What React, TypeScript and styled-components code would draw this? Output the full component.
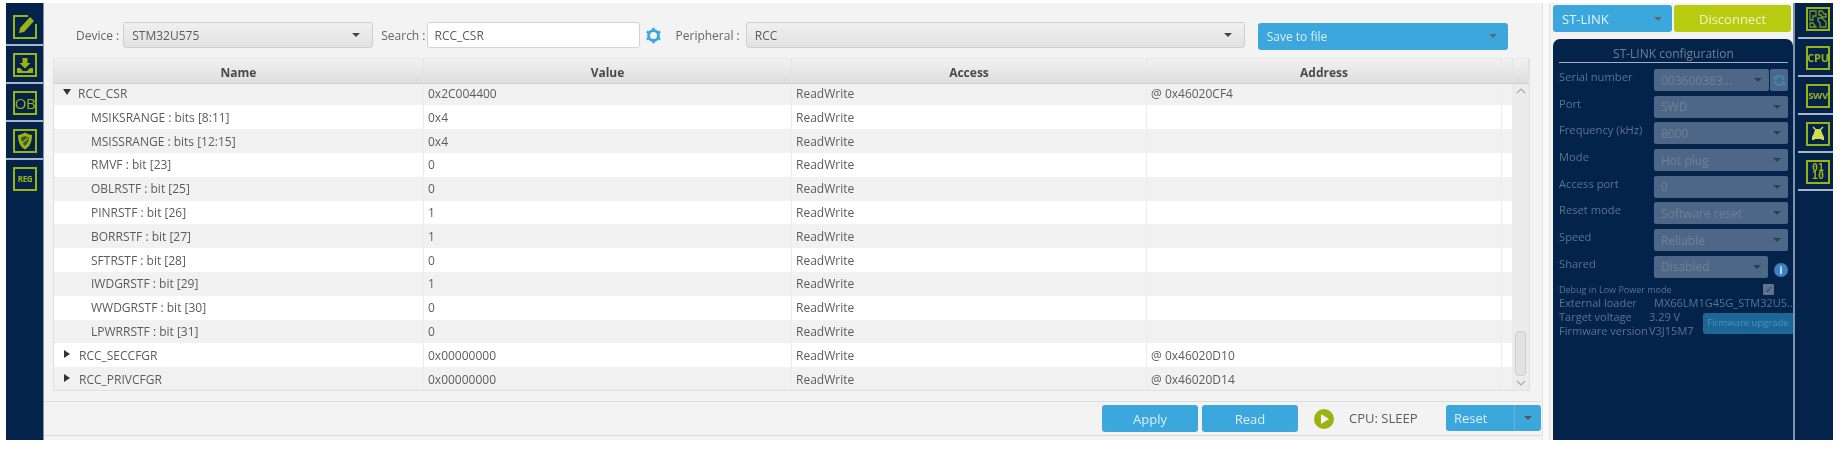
import React from 'react'
import styled, { createGlobalStyle } from 'styled-components'

const NAVY = '#03234b'
const GREEN = '#9ab312'
const BLUE = '#3ca7dc'

const Global = createGlobalStyle`
  html, body { margin: 0; padding: 0; background: #fff; }
  body { font-family: "Open Sans", "Liberation Sans", sans-serif; font-size: 12px; color: #5c5c5c; overflow: hidden; }
`

const Shell = styled.div`
  display: flex;
  width: 1827px;
  height: 437px;
  margin: 3px 0 0 6px;
  overflow: hidden;
  background: #f3f3f3;
  filter: blur(0.5px);
`

const Rail = styled.div<{ $side: 'left' | 'right' }>`
  flex: none;
  display: flex;
  flex-direction: column;
  width: ${(p) => (p.$side === 'left' ? 38 : 40)}px;
  padding-top: ${(p) => (p.$side === 'left' ? 5 : 0)}px;
  box-sizing: border-box;
  background: ${NAVY};
  border-left: ${(p) => (p.$side === 'right' ? '2px solid #7f93ab' : 'none')};
  border-right: ${(p) => (p.$side === 'left' ? '1px solid #7f93ab' : 'none')};
`

const RailItem = styled.div<{ $side: 'left' | 'right' }>`
  flex: none;
  height: 38px;
  box-sizing: border-box;
  padding: 7px 0 0 ${(p) => (p.$side === 'left' ? 7 : 8)}px;
  margin-left: ${(p) => (p.$side === 'left' ? 0 : 3)}px;
  border-bottom: 2px solid #a9b5c4;

  ${(p) =>
    p.$side === 'right'
      ? '&:first-child { height: 36px; padding-top: 4px; }'
      : '&:last-child { border-bottom: none; }'}
`

const RailIcon = styled.div`
  width: 24px;
  height: 24px;
  box-sizing: border-box;
  border: 2px solid ${GREEN};
  display: flex;
  align-items: center;
  justify-content: center;
  text-align: center;
  color: ${GREEN};
  font-weight: 700;
  line-height: 8px;
  overflow: hidden;
`

const RailText = styled.span<{ $size: number; $mono?: boolean; $thin?: boolean }>`
  font-size: ${(p) => p.$size}px;
  font-weight: ${(p) => (p.$thin ? 400 : 700)};
  font-family: ${(p) => (p.$mono ? '"DejaVu Sans Mono", monospace' : 'inherit')};
  letter-spacing: ${(p) => (p.$mono ? 0 : '-0.3px')};
`

const BareIcon = styled.svg`
  display: block;
  width: 24px;
  height: 24px;
`

const Main = styled.div`
  flex: none;
  width: 1497px;
  display: flex;
  flex-direction: column;
`

const Toolbar = styled.div`
  display: flex;
  align-items: center;
  height: 55px;
  padding: 9px 0 0 32px;
  box-sizing: border-box;
`

const Label = styled.span<{ $gap: number }>`
  margin-right: ${(p) => p.$gap}px;
  color: #666;
  white-space: nowrap;
`

const Select = styled.div<{ $w: number; $mr?: number }>`
  width: ${(p) => p.$w}px;
  margin-right: ${(p) => p.$mr ?? 0}px;
  height: 26px;
  box-sizing: border-box;
  padding: 0 12px 0 8px;
  display: flex;
  align-items: center;
  justify-content: space-between;
  border: 1px solid #cfcfcf;
  border-radius: 3px;
  background: linear-gradient(#f0f0f0, #e2e2e2);
`

const Caret = styled.i<{ $color?: string }>`
  width: 0;
  height: 0;
  border-left: 4px solid transparent;
  border-right: 4px solid transparent;
  border-top: 4px solid ${(p) => p.$color ?? '#444'};
`

const SearchBox = styled.div`
  width: 213px;
  height: 26px;
  box-sizing: border-box;
  padding: 0 7px;
  display: flex;
  align-items: center;
  background: #fff;
  border: 1px solid #d4d4d4;
  border-radius: 3px;
`

const GearSlot = styled.span`
  display: flex;
  margin: 0 14px 0 5px;
`

const SaveButton = styled.div`
  width: 250px;
  height: 27px;
  margin: 2px 0 0 13px;
  padding: 0 11px 0 9px;
  box-sizing: border-box;
  display: flex;
  align-items: center;
  justify-content: space-between;
  background: ${BLUE};
  color: #d8eef9;
  border-radius: 3px;
`

const TableFrame = styled.div`
  margin: 0 11px 0 9px;
  height: 333px;
  display: flex;
  flex-direction: column;
  border: 1px solid #e0e0e0;
  border-top: 1px solid #e6e6e6;
  box-sizing: border-box;
  background: #f3f3f3;
`

const cols = '370px 368px 355px 355px 11px'

const HeaderRow = styled.div`
  flex: none;
  display: grid;
  grid-template-columns: ${cols} 1fr;
  height: 25px;
  box-sizing: border-box;
  background: linear-gradient(#f1f1f1, #dedede);
  border-bottom: 1px solid #cfcfcf;
`

const HeaderCell = styled.div`
  display: flex;
  align-items: center;
  justify-content: center;
  padding-top: 2px;
  font-weight: 700;
  color: #4a4a4a;
  border-right: 1px solid #e4e4e4;
`

const TableBody = styled.div`
  flex: 1;
  display: flex;
  min-height: 0;
`

const Rows = styled.div`
  flex: 1;
  overflow: hidden;
`

const ScrollOffset = styled.div`
  margin-top: -2.4px;
`

const Row = styled.div<{ $odd: boolean }>`
  display: grid;
  grid-template-columns: ${cols};
  height: 23.8px;
  background: ${(p) => (p.$odd ? '#fff' : '#f1f1f1')};
`

const Cell = styled.div`
  display: flex;
  align-items: center;
  padding-left: 4px;
  box-sizing: border-box;
  border-right: 1px solid #ececec;
  white-space: nowrap;
`

const NameCell = styled(Cell)<{ $child?: boolean }>`
  padding-left: ${(p) => (p.$child ? 37 : 9)}px;
`

const Twisty = styled.i<{ $open: boolean }>`
  width: 0;
  height: 0;
  margin: 0 7px 3px 0;
  ${(p) =>
    p.$open
      ? 'border-left: 4px solid transparent; border-right: 4px solid transparent; border-top: 6px solid #333;'
      : 'margin-left: 1px; margin-right: 9px; border-top: 4px solid transparent; border-bottom: 4px solid transparent; border-left: 6px solid #333;'}
`

const ScrollBar = styled.div`
  flex: none;
  width: 17px;
  display: flex;
  flex-direction: column;
  align-items: center;
  justify-content: space-between;
  background: #ececec;
`

const Arrow = styled.svg`
  display: block;
  width: 10px;
  height: 14px;
  flex: none;
`

const ScrollSpacer = styled.div`
  flex: 1;
`

const Thumb = styled.div`
  flex: none;
  width: 11px;
  height: 45px;
  box-sizing: border-box;
  background: #e2e2e2;
  border: 1px solid #cdcdcd;
  border-radius: 4px;
`

const Footer = styled.div`
  margin-top: 10px;
  height: 35px;
  box-sizing: border-box;
  padding-top: 3px;
  display: flex;
  align-items: flex-start;
  justify-content: flex-end;
  border-top: 1px solid #dcdcdc;
  border-bottom: 1px solid #dcdcdc;
`

const ActionButton = styled.div<{ $ml?: number }>`
  width: 96px;
  height: 27px;
  margin-left: ${(p) => p.$ml ?? 0}px;
  display: flex;
  align-items: center;
  justify-content: center;
  background: ${BLUE};
  color: #d8eef9;
  border-radius: 3px;
  font-size: 13px;
`

const PlayBadge = styled.div`
  width: 20px;
  height: 20px;
  margin: 4px 15px 0 16px;
  border-radius: 50%;
  background: ${GREEN};
  display: flex;
  align-items: center;
  justify-content: center;
`

const PlayMark = styled.i`
  width: 0;
  height: 0;
  margin-left: 2px;
  border-top: 5px solid transparent;
  border-bottom: 5px solid transparent;
  border-left: 8px solid #f3f3f3;
`

const CpuState = styled.span`
  width: 97px;
  line-height: 27px;
  font-size: 13px;
`

const ResetGroup = styled.div`
  width: 95px;
  height: 26px;
  display: flex;
  background: ${BLUE};
  color: #d8eef9;
  border-radius: 3px;
  font-size: 13px;
`

const ResetLabel = styled.div`
  width: 69px;
  padding-left: 8px;
  box-sizing: border-box;
  line-height: 26px;
  border-right: 1px solid #7fa9c4;
`

const ResetCaret = styled.div`
  flex: 1;
  display: flex;
  align-items: center;
  justify-content: center;
`

const Splitter = styled.div`
  flex: none;
  width: 12px;
  display: flex;
  justify-content: center;
`

const SplitLine = styled.div`
  width: 6px;
  margin-right: 3px;
  background: #fafafa;
  border-left: 1px solid #e2e2e2;
  border-right: 1px solid #e2e2e2;
`

const Side = styled.div`
  flex: none;
  width: 240px;
  padding-top: 2px;
  box-sizing: border-box;
  display: flex;
  flex-direction: column;
  gap: 7px;
`

const SideTop = styled.div`
  flex: none;
  display: flex;
  gap: 2px;
  padding-right: 2px;
`

const ProbeSelect = styled.div`
  width: 119px;
  height: 27px;
  padding: 0 10px 0 9px;
  box-sizing: border-box;
  display: flex;
  align-items: center;
  justify-content: space-between;
  background: ${BLUE};
  color: #e3f3fb;
  border-radius: 3px;
  font-size: 13px;
`

const DisconnectButton = styled.div`
  flex: 1;
  height: 27px;
  display: flex;
  align-items: center;
  justify-content: center;
  background: #b9cb10;
  color: #eef4c4;
  border-radius: 3px;
  font-size: 13px;
`

const ConfigPanel = styled.div`
  flex: 1;
  background: ${NAVY};
  border-radius: 7px 7px 0 0;
  padding: 6px 5px 0 6px;
  position: relative;
`

const ConfigTitle = styled.div`
  height: 17px;
  line-height: 17px;
  text-align: center;
  color: #6f8099;
  font-size: 12px;
  border-bottom: 1px solid #a5b1c0;
  margin-bottom: 6px;
`

const FieldRow = styled.div`
  display: flex;
  height: 22px;
  margin-bottom: 4.7px;
  color: #5d7390;
  font-size: 11.2px;
`

const FieldName = styled.div`
  width: 95px;
  flex: none;
  white-space: nowrap;
  line-height: 15px;
`

const FieldSelect = styled.div<{ $w: number }>`
  width: ${(p) => p.$w}px;
  height: 22px;
  padding: 0 7px;
  box-sizing: border-box;
  display: flex;
  align-items: center;
  justify-content: space-between;
  background: #4f6786;
  color: #6d8099;
  border-radius: 2px;
  font-size: 12px;
`

const RefreshBox = styled.div`
  width: 18px;
  height: 22px;
  margin-left: 1px;
  background: #4f6786;
  border-radius: 2px;
  display: flex;
  align-items: center;
  justify-content: center;
`

const InfoDot = styled.div`
  width: 14px;
  height: 14px;
  margin: 7px 0 0 6px;
  border-radius: 50%;
  background: #3f7fc4;
  color: #dcebf8;
  font-size: 11px;
  font-weight: 700;
  line-height: 14px;
  text-align: center;
`

const DebugRow = styled.div`
  display: flex;
  justify-content: space-between;
  align-items: center;
  height: 13px;
  margin-top: 2px;
  padding-right: 14px;
  color: #5d7390;
  font-size: 9px;
`

const Check = styled.div`
  width: 11px;
  height: 11px;
  background: #5d7390;
  border-radius: 1px;
  color: #2d4666;
  font-size: 10px;
  line-height: 11px;
  text-align: center;
`

const InfoLine = styled.div`
  display: flex;
  height: 14px;
  line-height: 14px;
  color: #5d7390;
  font-size: 11px;
  white-space: nowrap;
`

const InfoKey = styled.span<{ $w: number }>`
  width: ${(p) => p.$w}px;
  flex: none;
`

const UpgradeButton = styled.div`
  position: absolute;
  right: 0;
  top: 274px;
  width: 90px;
  height: 21px;
  background: #1d6797;
  color: #4a8fb8;
  font-size: 9.5px;
  line-height: 20px;
  text-align: center;
  border-radius: 3px 0 0 3px;
`

const rows = [
  { name: 'RCC_CSR', value: '0x2C004400', address: '@ 0x46020CF4', twisty: 'open' },
  { name: 'MSIKSRANGE : bits [8:11]', value: '0x4' },
  { name: 'MSISSRANGE : bits [12:15]', value: '0x4' },
  { name: 'RMVF : bit [23]', value: '0' },
  { name: 'OBLRSTF : bit [25]', value: '0' },
  { name: 'PINRSTF : bit [26]', value: '1' },
  { name: 'BORRSTF : bit [27]', value: '1' },
  { name: 'SFTRSTF : bit [28]', value: '0' },
  { name: 'IWDGRSTF : bit [29]', value: '1' },
  { name: 'WWDGRSTF : bit [30]', value: '0' },
  { name: 'LPWRRSTF : bit [31]', value: '0' },
  { name: 'RCC_SECCFGR', value: '0x00000000', address: '@ 0x46020D10', twisty: 'closed' },
  { name: 'RCC_PRIVCFGR', value: '0x00000000', address: '@ 0x46020D14', twisty: 'closed' },
]

const fields = [
  { label: 'Port', value: 'SWD' },
  { label: 'Frequency (kHz)', value: '8000' },
  { label: 'Mode', value: 'Hot plug' },
  { label: 'Access port', value: '0' },
  { label: 'Reset mode', value: 'Software reset' },
  { label: 'Speed', value: 'Reliable' },
]

const PencilIcon = () => (
  <BareIcon viewBox="0 0 24 24" fill="none">
    <path d="M15 1H1v22h22V9" stroke={GREEN} strokeWidth="2" />
    <path d="M6 18l1-5L17 2l4 4L11 17z" fill={GREEN} />
  </BareIcon>
)

const DownloadIcon = () => (
  <BareIcon viewBox="0 0 24 24" fill="none">
    <rect x="1" y="1" width="22" height="22" stroke={GREEN} strokeWidth="2" />
    <path d="M9.5 5h5v5h3L12 15.5 6.500 10h3z M4 15h3l3 3h4l3-3h3v5H4z" fill={GREEN} />
  </BareIcon>
)

const ShieldIcon = () => (
  <BareIcon viewBox="0 0 24 24" fill="none">
    <rect x="1" y="1" width="22" height="22" stroke={GREEN} strokeWidth="2" />
    <path d="M12 3.500c2.500 1.800 5 2.300 7 2.500 0 7-2 11.500-7 14.500C7 17.500 5 13 5 6c2-.2 4.500-.7 7-2.500z" fill={GREEN} />
    <path d="M12 7c1.500.8 2.600 1.100 4 1.300-.2 4-1.400 6.700-4 8.700-2.600-2-3.800-4.700-4-8.700C9.400 8.100 10.500 7.800 12 7z" fill="#3f5a2e" />
    <path d="M9 14l6-5" stroke={GREEN} strokeWidth="1.500" />
  </BareIcon>
)

const ChipIcon = () => (
  <BareIcon viewBox="0 0 24 24" fill="none">
    <rect x="1" y="1" width="22" height="22" stroke={GREEN} strokeWidth="2" />
    <path d="M4 4h6v5H7v4H4z M13 4h3l2 3h2v3h-4l-1-2h-2z M12 11h4l4 4v5h-6v-4l-2-2z M4 16h3l3 4H4z" stroke={GREEN} strokeWidth="1.300" opacity="0.8" />
  </BareIcon>
)

const BugIcon = () => (
  <BareIcon viewBox="0 0 24 24" fill="none">
    <rect x="1" y="1" width="22" height="22" stroke={GREEN} strokeWidth="2" />
    <path d="M7 5l3 3h4l3-3" stroke="#d7e36a" strokeWidth="1.300" />
    <path d="M12 7c2.500 0 4 2 4 4l2 4v3h-2l-1-1H9l-1 1H6v-3l2-4c0-2 1.500-4 4-4z" fill="#d0df4a" />
  </BareIcon>
)

const GearIcon = () => (
  <svg width="17" height="17" viewBox="0 0 24 24" fill="none">
    <circle cx="12" cy="12" r="7" stroke={BLUE} strokeWidth="4" />
    <path d="M12 1v4M12 19v4M2.500 6.500l3.500 2M18 15.500l3.500 2M2.500 17.500l3.500-2M18 8.500l3.500-2" stroke={BLUE} strokeWidth="3.500" />
  </svg>
)

const RefreshIcon = () => (
  <svg width="13" height="13" viewBox="0 0 24 24" fill="none" stroke="#3f86b8" strokeWidth="3.500">
    <path d="M20 11a8 8 0 0 0-14-5l-2 2M4 13a8 8 0 0 0 14 5l2-2" />
    <path d="M3 3v6h6M21 21v-6h-6" strokeWidth="2.500" />
  </svg>
)

export default function App() {
  return (
    <>
      <Global />
      <Shell>
        <Rail $side="left">
          <RailItem $side="left"><PencilIcon /></RailItem>
          <RailItem $side="left"><DownloadIcon /></RailItem>
          <RailItem $side="left"><RailIcon><RailText $size={15} $thin>OB</RailText></RailIcon></RailItem>
          <RailItem $side="left"><ShieldIcon /></RailItem>
          <RailItem $side="left"><RailIcon><RailText $size={8}>REG</RailText></RailIcon></RailItem>
        </Rail>

        <Main>
          <Toolbar>
            <Label $gap={4}>Device :</Label>
            <Select $w={250} $mr={8}>STM32U575<Caret /></Select>
            <Label $gap={1}>Search :</Label>
            <SearchBox>RCC_CSR</SearchBox>
            <GearSlot><GearIcon /></GearSlot>
            <Label $gap={6}>Peripheral :</Label>
            <Select $w={499}>RCC<Caret /></Select>
            <SaveButton>Save to file<Caret $color="#666" /></SaveButton>
          </Toolbar>

          <TableFrame>
            <HeaderRow>
              <HeaderCell>Name</HeaderCell>
              <HeaderCell>Value</HeaderCell>
              <HeaderCell>Access</HeaderCell>
              <HeaderCell>Address</HeaderCell>
              <HeaderCell />
              <HeaderCell />
            </HeaderRow>
            <TableBody>
              <Rows>
                <ScrollOffset>
                  {rows.map((r, i) => (
                    <Row key={r.name} $odd={i % 2 === 1}>
                      <NameCell $child={!r.twisty}>
                        {r.twisty && <Twisty $open={r.twisty === 'open'} />}
                        {r.name}
                      </NameCell>
                      <Cell>{r.value}</Cell>
                      <Cell>ReadWrite</Cell>
                      <Cell>{r.address}</Cell>
                      <Cell />
                    </Row>
                  ))}
                </ScrollOffset>
              </Rows>
              <ScrollBar>
                <Arrow viewBox="0 0 10 14" fill="none" stroke="#aaa" strokeWidth="1.200"><path d="M1 9l4-4 4 4" /></Arrow>
                <ScrollSpacer />
                <Thumb />
                <Arrow viewBox="0 0 10 14" fill="none" stroke="#aaa" strokeWidth="1.200"><path d="M1 5l4 4 4-4" /></Arrow>
              </ScrollBar>
            </TableBody>
          </TableFrame>

          <Footer>
            <ActionButton>Apply</ActionButton>
            <ActionButton $ml={4}>Read</ActionButton>
            <PlayBadge><PlayMark /></PlayBadge>
            <CpuState>CPU: SLEEP</CpuState>
            <ResetGroup>
              <ResetLabel>Reset</ResetLabel>
              <ResetCaret><Caret $color="#555" /></ResetCaret>
            </ResetGroup>
          </Footer>
        </Main>

        <Splitter><SplitLine /></Splitter>

        <Side>
          <SideTop>
            <ProbeSelect>ST-LINK<Caret $color="#666" /></ProbeSelect>
            <DisconnectButton>Disconnect</DisconnectButton>
          </SideTop>
          <ConfigPanel>
            <ConfigTitle>ST-LINK configuration</ConfigTitle>
            <FieldRow>
              <FieldName>Serial number</FieldName>
              <FieldSelect $w={115}>003600383...<Caret $color="#27405f" /></FieldSelect>
              <RefreshBox><RefreshIcon /></RefreshBox>
            </FieldRow>
            {fields.map((f) => (
              <FieldRow key={f.label}>
                <FieldName>{f.label}</FieldName>
                <FieldSelect $w={134}>{f.value}<Caret $color="#27405f" /></FieldSelect>
              </FieldRow>
            ))}
            <FieldRow>
              <FieldName>Shared</FieldName>
              <FieldSelect $w={114}>Disabled<Caret $color="#27405f" /></FieldSelect>
              <InfoDot>i</InfoDot>
            </FieldRow>
            <DebugRow>Debug in Low Power mode<Check>✓</Check></DebugRow>
            <InfoLine><InfoKey $w={95}>External loader</InfoKey>MX66LM1G45G_STM32U5...</InfoLine>
            <InfoLine><InfoKey $w={90}>Target voltage</InfoKey>3.29 V</InfoLine>
            <InfoLine><InfoKey $w={90}>Firmware version</InfoKey>V3J15M7</InfoLine>
            <UpgradeButton>Firmware upgrade</UpgradeButton>
          </ConfigPanel>
        </Side>

        <Rail $side="right">
          <RailItem $side="right"><ChipIcon /></RailItem>
          <RailItem $side="right"><RailIcon><RailText $size={11}>CPU</RailText></RailIcon></RailItem>
          <RailItem $side="right"><RailIcon><RailText $size={9.500}>SWV</RailText></RailIcon></RailItem>
          <RailItem $side="right"><BugIcon /></RailItem>
          <RailItem $side="right"><RailIcon><RailText $size={10} $mono>01<br />10</RailText></RailIcon></RailItem>
        </Rail>
      </Shell>
    </>
  )
}
